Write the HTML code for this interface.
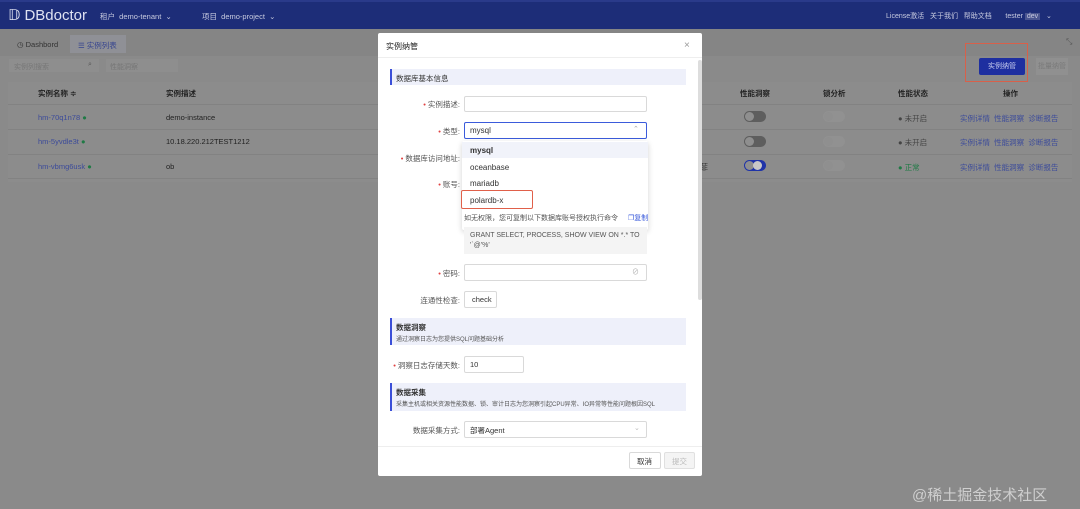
<!DOCTYPE html>
<html style="background:#8a8a8a"><head><meta charset="utf-8"><style>
*{box-sizing:border-box;margin:0;padding:0}
body{width:1080px;height:509px;overflow:hidden;background:#8a8a8a;font-family:"Liberation Sans","Noto Sans CJK SC",sans-serif;font-size:8px;color:#222;position:relative}
.a{position:absolute;white-space:nowrap}
.hdr{left:0;top:0;width:1080px;height:29px;background:#1d2d78;border-top:2px solid #2a3a8a}
.w{color:#c8cbe0}
.lnk{color:#3c4b9a}
.inp{position:absolute;background:#fff;border:1px solid #d9d9d9;border-radius:2px}
.sec{position:absolute;left:390px;width:296px;background:#eef0fa;border-left:2px solid #3b4fd8}
.lbl{position:absolute;font-size:7.5px;color:#555;text-align:right;width:80px}
.lbl b{color:#e04040;font-weight:normal}
.tg{position:absolute;width:22px;height:11px;border-radius:6px;background:#5e5e5e}
.tg:after{content:"";position:absolute;left:1px;top:1px;width:9px;height:9px;border-radius:50%;background:#8f8f8f}
</style></head><body>
<div class="a" style="left:0;top:0;width:1080px;height:509px;background:#8a8a8a"></div>
<div class="a hdr"></div>
<div class="a" style="left:8px;top:6px;color:#e0e3f2;font-size:15px">&#x1D53B; DBdoctor</div>
<div class="a w" style="left:100px;top:11px;font-size:7.5px">租户 &nbsp;demo-tenant &nbsp;⌄</div>
<div class="a w" style="left:202px;top:11px;font-size:7.5px">项目 &nbsp;demo-project &nbsp;⌄</div>
<div class="a w" style="left:886px;top:11px;font-size:7px">License激活 &nbsp; 关于我们 &nbsp; 帮助文档 &nbsp; &nbsp; &nbsp; tester <span style="background:#4a5590;padding:0 2px">dev</span> &nbsp; ⌄</div>
<div class="a" style="left:0;top:29px;width:1080px;height:27px;background:#858585"></div>
<div class="a" style="left:17px;top:40px;color:#333;font-size:7.5px">◷ Dashbord</div>
<div class="a" style="left:70px;top:35px;width:56px;height:18px;background:#8f9096"></div>
<div class="a" style="left:78px;top:40px;color:#36448f;font-size:7.5px">☰ 实例列表</div>
<div class="a" style="left:1066px;top:37px;color:#555">⤡</div>
<div class="a" style="left:9px;top:59px;width:90px;height:13px;background:#8e8e8e"></div>
<div class="a" style="left:106px;top:59px;width:72px;height:13px;background:#8e8e8e"></div>
<div class="a" style="left:14px;top:62px;color:#777;font-size:7px">实例列搜索</div>
<div class="a" style="left:88px;top:61px;color:#555;font-size:7px">⌕</div>
<div class="a" style="left:110px;top:62px;color:#777;font-size:7px">性能洞察</div>
<div class="a" style="left:8px;top:82px;width:1064px;height:100px;background:#8c8c8c"></div>
<div class="a" style="left:38px;top:88px;font-weight:bold;color:#222;font-size:7.5px">实例名称 ≑</div>
<div class="a" style="left:166px;top:88px;font-weight:bold;color:#222;font-size:7.5px">实例描述</div>
<div class="a" style="left:740px;top:88px;font-weight:bold;color:#222;font-size:7.5px">性能洞察</div>
<div class="a" style="left:823px;top:88px;font-weight:bold;color:#222;font-size:7.5px">锁分析</div>
<div class="a" style="left:898px;top:88px;font-weight:bold;color:#222;font-size:7.5px">性能状态</div>
<div class="a" style="left:1003px;top:88px;font-weight:bold;color:#222;font-size:7.5px">操作</div>
<div class="a" style="left:8px;top:104px;width:1064px;height:1px;background:#828282"></div>
<div class="a" style="left:8px;top:129px;width:1064px;height:1px;background:#828282"></div>
<div class="a" style="left:8px;top:154px;width:1064px;height:1px;background:#828282"></div>
<div class="a" style="left:8px;top:178px;width:1064px;height:1px;background:#828282"></div>
<div class="a lnk" style="left:38px;top:113px;font-size:7.5px">hm-70q1n78 <span style="color:#1f7a45">●</span></div>
<div class="a lnk" style="left:38px;top:137px;font-size:7.5px">hm-5yvdle3t <span style="color:#1f7a45">●</span></div>
<div class="a lnk" style="left:38px;top:162px;font-size:7.5px">hm-vbmg6usk <span style="color:#1f7a45">●</span></div>
<div class="a" style="left:166px;top:113px;font-size:7.5px;color:#222">demo-instance</div>
<div class="a" style="left:166px;top:137px;font-size:7.5px;color:#222">10.18.220.212TEST1212</div>
<div class="a" style="left:166px;top:162px;font-size:7.5px;color:#222">ob</div>
<div class="tg" style="left:744px;top:111px"></div>
<div class="tg" style="left:744px;top:136px"></div>
<div class="tg" style="left:744px;top:160px;background:#1f33a8"></div>
<div class="a" style="left:753px;top:161px;width:9px;height:9px;border-radius:50%;background:#c8c8c8"></div>
<div class="tg" style="left:823px;top:111px;background:#919191"></div>
<div class="tg" style="left:823px;top:136px;background:#919191"></div>
<div class="tg" style="left:823px;top:160px;background:#919191"></div>
<div class="a" style="left:898px;top:113px;color:#444;font-size:7.5px">● 未开启</div>
<div class="a" style="left:898px;top:137px;color:#444;font-size:7.5px">● 未开启</div>
<div class="a" style="left:898px;top:162px;color:#1f7a45;font-size:7.5px">● 正常</div>
<div class="a lnk" style="left:960px;top:113px;font-size:7.5px">实例详情 &nbsp;性能洞察 &nbsp;诊断报告</div>
<div class="a lnk" style="left:960px;top:137px;font-size:7.5px">实例详情 &nbsp;性能洞察 &nbsp;诊断报告</div>
<div class="a lnk" style="left:960px;top:162px;font-size:7.5px">实例详情 &nbsp;性能洞察 &nbsp;诊断报告</div>
<div class="a" style="left:979px;top:58px;width:46px;height:17px;background:#1e2fa0;border-radius:2px;color:#c8cdef;font-size:7px;text-align:center;line-height:17px">实例纳管</div>
<div class="a" style="left:965px;top:43px;width:63px;height:39px;border:1.5px solid #d8604a"></div>
<div class="a" style="left:1036px;top:58px;width:32px;height:17px;background:#909090;color:#7a7a7a;font-size:7px;text-align:center;line-height:17px">批量纳管</div>
<div class="a" style="left:700px;top:162px;color:#333">菲</div>
<div class="a" style="left:912px;top:484px;color:#cfcfcf;font-size:15px">@稀土掘金技术社区</div>

<div class="a" style="left:378px;top:33px;width:324px;height:443px;background:#fff;border-radius:2px"></div>
<div class="a" style="left:386px;top:41px;font-size:8px;color:#222">实例纳管</div>
<div class="a" style="left:684px;top:40px;font-size:10px;color:#999">×</div>
<div class="a" style="left:378px;top:57px;width:324px;height:1px;background:#eee"></div>
<div class="a" style="left:698px;top:60px;width:4px;height:240px;background:#ddd;border-radius:2px"></div>
<div class="sec" style="top:69px;height:16px"></div>
<div class="a" style="left:396px;top:73px;font-size:7.5px;color:#333">数据库基本信息</div>
<div class="lbl" style="left:378px;top:99px;width:82px"><b>•</b> 实例描述:</div>
<div class="inp" style="left:464px;top:96px;width:183px;height:16px"></div>
<div class="lbl" style="left:378px;top:126px;width:82px"><b>•</b> 类型:</div>
<div class="inp" style="left:464px;top:122px;width:183px;height:17px;border-color:#3b5bdb"></div>
<div class="a" style="left:470px;top:126px;font-size:8px;color:#333">mysql</div>
<div class="a" style="left:633px;top:125px;font-size:7px;color:#aaa">⌃</div>
<div class="lbl" style="left:378px;top:153px;width:82px"><b>•</b> 数据库访问地址:</div>
<div class="lbl" style="left:378px;top:179px;width:82px"><b>•</b> 账号:</div>
<div class="a" style="left:462px;top:141px;width:186px;height:89px;background:#fff;box-shadow:0 2px 6px rgba(0,0,0,.18);border-radius:2px"></div>
<div class="a" style="left:462px;top:142px;width:186px;height:16px;background:#f1f3fa"></div>
<div class="a" style="left:470px;top:146px;font-size:8px;font-weight:bold;color:#333">mysql</div>
<div class="a" style="left:470px;top:163px;font-size:8px;color:#333">oceanbase</div>
<div class="a" style="left:470px;top:179px;font-size:8px;color:#333">mariadb</div>
<div class="a" style="left:470px;top:196px;font-size:8px;color:#333">polardb-x</div>
<div class="a" style="left:461px;top:190px;width:72px;height:19px;border:1.5px solid #e0604a;border-radius:2px"></div>
<div class="a" style="left:464px;top:213px;font-size:7px;color:#555">如无权限，您可复制以下数据库账号授权执行命令</div>
<div class="a" style="left:628px;top:213px;font-size:7px;color:#3b5bdb">❐复制</div>
<div class="a" style="left:464px;top:227px;width:183px;height:27px;background:#f4f4f4"></div>
<div class="a" style="left:470px;top:231px;font-size:7px;color:#555;line-height:10px">GRANT SELECT, PROCESS, SHOW VIEW ON *.* TO<br>'`@'%'</div>
<div class="lbl" style="left:378px;top:268px;width:82px"><b>•</b> 密码:</div>
<div class="inp" style="left:464px;top:264px;width:183px;height:17px"></div>
<div class="a" style="left:632px;top:267px;font-size:7px;color:#aaa">⊘</div>
<div class="lbl" style="left:378px;top:295px;width:82px">连通性检查:</div>
<div class="inp" style="left:464px;top:291px;width:33px;height:17px"></div>
<div class="a" style="left:472px;top:295px;font-size:7.5px;color:#333">check</div>
<div class="sec" style="top:318px;height:27px"></div>
<div class="a" style="left:396px;top:322px;font-size:7.5px;color:#333;font-weight:bold">数据洞察</div>
<div class="a" style="left:396px;top:334px;font-size:6px;color:#555">通过洞察日志为您提供SQL问题基础分析</div>
<div class="lbl" style="left:378px;top:360px;width:82px"><b>•</b> 洞察日志存储天数:</div>
<div class="inp" style="left:464px;top:356px;width:60px;height:17px"></div>
<div class="a" style="left:470px;top:360px;font-size:7.5px;color:#333">10</div>
<div class="sec" style="top:383px;height:28px"></div>
<div class="a" style="left:396px;top:387px;font-size:7.5px;color:#333;font-weight:bold">数据采集</div>
<div class="a" style="left:396px;top:399px;font-size:6px;color:#555">采集主机或相关资源性能数据、锁、审计日志为您洞察引起CPU异常、IO异常等性能问题根因SQL</div>
<div class="lbl" style="left:378px;top:425px;width:82px">数据采集方式:</div>
<div class="inp" style="left:464px;top:421px;width:183px;height:17px"></div>
<div class="a" style="left:470px;top:425px;font-size:7.5px;color:#333">部署Agent</div>
<div class="a" style="left:634px;top:424px;font-size:7px;color:#bbb">⌄</div>
<div class="a" style="left:378px;top:446px;width:324px;height:1px;background:#eee"></div>
<div class="inp" style="left:629px;top:452px;width:32px;height:17px"></div>
<div class="a" style="left:637px;top:456px;font-size:7.5px;color:#333">取消</div>
<div class="a" style="left:664px;top:452px;width:31px;height:17px;background:#f4f4f4;border:1px solid #e0e0e0;border-radius:2px"></div>
<div class="a" style="left:672px;top:456px;font-size:7.5px;color:#bbb">提交</div>
</body></html>
